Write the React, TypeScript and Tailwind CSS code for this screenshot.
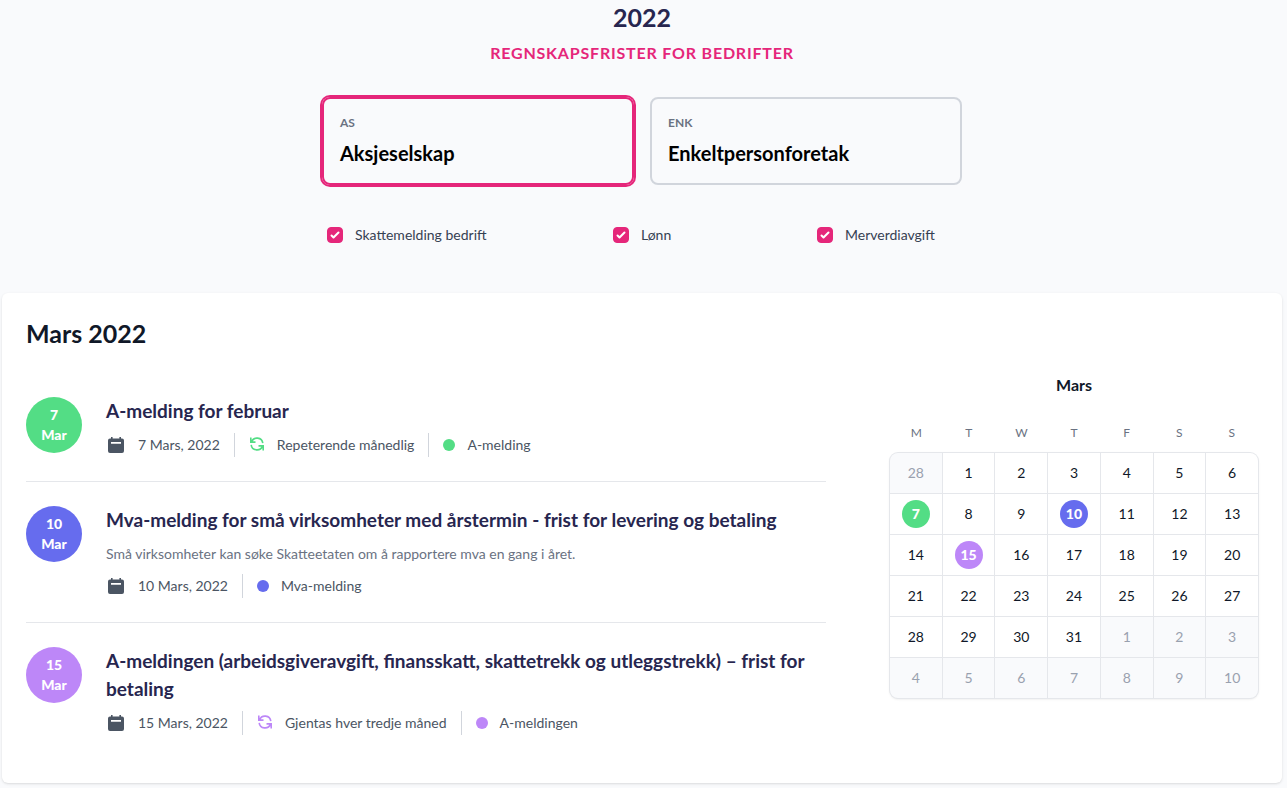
import { useState } from 'react';
import clsx from 'clsx';

type Tone = 'green' | 'indigo' | 'purple';

interface Deadline {
  day: number;
  title: string;
  description?: string;
  repeats?: string;
  category: string;
  tone: Tone;
}

const toneBg: Record<Tone, string> = {
  green: 'bg-[#53dd85]',
  indigo: 'bg-[#666cee]',
  purple: 'bg-[#bd87f8]',
};

const toneText: Record<Tone, string> = {
  green: 'text-[#53dd85]',
  indigo: 'text-[#666cee]',
  purple: 'text-[#bd87f8]',
};

const deadlines: Deadline[] = [
  {
    day: 7,
    title: 'A-melding for februar',
    repeats: 'Repeterende månedlig',
    category: 'A-melding',
    tone: 'green',
  },
  {
    day: 10,
    title: 'Mva-melding for små virksomheter med årstermin - frist for levering og betaling',
    description: 'Små virksomheter kan søke Skatteetaten om å rapportere mva en gang i året.',
    category: 'Mva-melding',
    tone: 'indigo',
  },
  {
    day: 15,
    title: 'A-meldingen (arbeidsgiveravgift, finansskatt, skattetrekk og utleggstrekk) – frist for betaling',
    repeats: 'Gjentas hver tredje måned',
    category: 'A-meldingen',
    tone: 'purple',
  },
];

const companyTypes = [
  { code: 'AS', name: 'Aksjeselskap' },
  { code: 'ENK', name: 'Enkeltpersonforetak' },
];

const filters = ['Skattemelding bedrift', 'Lønn', 'Merverdiavgift'];

const weekdays = ['M', 'T', 'W', 'T', 'F', 'S', 'S'];

// 28 Feb, the 31 days of March and the first 10 of April
const calendarDays = Array.from({ length: 42 }, (_, i) => {
  if (i === 0) return { day: 28, current: false };
  if (i > 31) return { day: i - 31, current: false };
  return { day: i, current: true };
});

function CalendarIcon() {
  return (
    <svg viewBox="0 0 20 20" className="size-5 shrink-0 text-[#4b5563]" fill="currentColor" aria-hidden="true">
      <path
        fillRule="evenodd"
        d="M5 2h1.6v1.6h6.8V2H15v1.6h1a2 2 0 0 1 2 2V16a2 2 0 0 1-2 2H4a2 2 0 0 1-2-2V5.6a2 2 0 0 1 2-2h1V2Zm0 5v1.8h10V7H5Z"
      />
    </svg>
  );
}

function RepeatIcon({ tone }: { tone: Tone }) {
  return (
    <svg
      viewBox="0 0 16 16"
      className={clsx('size-4 shrink-0', toneText[tone])}
      fill="none"
      stroke="currentColor"
      strokeWidth="1.6"
      aria-hidden="true"
    >
      <path d="M1.8 .5v4.6h4.7M2.6 4.9A5.8 5.8 0 0 1 13.8 6.2" />
      <path d="M14.2 13.5V8.900H9.500M13.400 9.100A5.800 5.800 0 0 1 2.200 7.800" />
    </svg>
  );
}

function DeadlineItem({ deadline }: { deadline: Deadline }) {
  const { day, title, description, repeats, category, tone } = deadline;

  return (
    <li className="flex gap-6 py-6">
      <div
        className={clsx(
          'flex size-14 shrink-0 flex-col items-center justify-center rounded-full text-sm font-black text-white',
          toneBg[tone],
        )}
      >
        <span>{day}</span>
        <span>Mar</span>
      </div>
      <div className="min-w-0 flex-1">
        <h3 className="text-[19px] leading-7 font-bold text-[#27264f]">{title}</h3>
        {description && <p className="mt-2 text-sm leading-6 text-gray-500">{description}</p>}
        <div className="mt-2 flex h-6 items-center divide-x divide-gray-300 text-sm text-[#4b5563]">
          <div className="flex h-6 items-center gap-3 pr-3.5">
            <CalendarIcon />
            <span>{day} Mars, 2022</span>
          </div>
          {repeats && (
            <div className="flex h-6 items-center gap-3 px-3.5">
              <RepeatIcon tone={tone} />
              <span>{repeats}</span>
            </div>
          )}
          <div className="flex h-6 items-center gap-3 pl-3.5">
            <span className={clsx('size-3 rounded-full', toneBg[tone])} />
            <span>{category}</span>
          </div>
        </div>
      </div>
    </li>
  );
}

function MonthCalendar() {
  return (
    <section className="text-center">
      <h3 className="text-base leading-6 font-bold text-gray-900">Mars</h3>
      <div className="mt-6 grid grid-cols-7 text-xs leading-6 text-gray-500">
        {weekdays.map((weekday, i) => (
          <div key={i}>{weekday}</div>
        ))}
      </div>
      <div className="mt-2 grid grid-cols-7 gap-px overflow-hidden rounded-lg bg-gray-200 text-sm shadow-sm ring-1 ring-gray-200">
        {calendarDays.map(({ day, current }, i) => {
          const deadline = current ? deadlines.find(item => item.day === day) : undefined;
          return (
            <button
              key={i}
              type="button"
              className={clsx(
                'flex h-10 items-center justify-center',
                current ? 'bg-white text-gray-900' : 'bg-[#f9fafc] text-gray-400',
              )}
            >
              <span
                className={clsx(
                  'flex size-7 items-center justify-center rounded-full',
                  deadline && 'font-black text-white',
                  deadline && toneBg[deadline.tone],
                )}
              >
                {day}
              </span>
            </button>
          );
        })}
      </div>
    </section>
  );
}

export default function App() {
  const [companyType, setCompanyType] = useState('AS');
  const [active, setActive] = useState<string[]>(filters);

  const toggleFilter = (name: string) => {
    setActive(prev => (prev.includes(name) ? prev.filter(item => item !== name) : [...prev, name]));
  };

  return (
    <div className="min-h-screen bg-[#f9fafc] pr-[5px] pb-[5px] pl-0.5 font-['Lato','Liberation_Sans',sans-serif]">
      <header className="text-center">
        <h1 className="pt-px text-[25px] leading-8 font-bold text-[#27264f]">2022</h1>
        <p className="mt-2 text-base leading-6 font-bold tracking-wider text-[#e5267a] uppercase">
          Regnskapsfrister for bedrifter
        </p>
      </header>

      <div className="mx-auto mt-8 max-w-[640px]">
        <div className="grid grid-cols-2 gap-4">
          {companyTypes.map(({ code, name }) => (
            <button
              key={code}
              type="button"
              onClick={() => setCompanyType(code)}
              className={clsx(
                'flex h-[88px] flex-col justify-center rounded-lg border-2 px-4 text-left',
                companyType === code ? 'border-[#e5267a] ring-2 ring-[#e5267a]' : 'border-gray-300',
              )}
            >
              <span className="text-xs leading-4 font-bold text-gray-500">{code}</span>
              <span className="mt-2 text-xl leading-7 font-bold text-black">{name}</span>
            </button>
          ))}
        </div>

        <div className="mt-10 grid grid-cols-[286fr_204fr_145fr] pl-[5px]">
          {filters.map(name => (
            <label key={name} className="flex items-center text-sm text-gray-700">
              <input
                type="checkbox"
                checked={active.includes(name)}
                onChange={() => toggleFilter(name)}
                className="peer sr-only"
              />
              <span className="mr-3 flex size-4 items-center justify-center rounded border border-gray-300 bg-white peer-checked:border-[#e5267a] peer-checked:bg-[#e5267a]">
                <svg viewBox="0 0 16 16" className="size-4 shrink-0 fill-white" aria-hidden="true">
                  <path d="M12.207 4.793a1 1 0 0 1 0 1.414l-5 5a1 1 0 0 1-1.414 0l-2-2a1 1 0 0 1 1.414-1.414L6.5 9.086l4.293-4.293a1 1 0 0 1 1.414 0z" />
                </svg>
              </span>
              {name}
            </label>
          ))}
        </div>
      </div>

      <main className="mt-12 rounded-md bg-white p-6 shadow-sm">
        <h2 className="text-[25px] leading-8 font-bold text-gray-900">Mars 2022</h2>
        <div className="mt-6 grid grid-cols-12 gap-x-16">
          <ol className="col-span-8 divide-y divide-gray-200">
            {deadlines.map(deadline => (
              <DeadlineItem key={deadline.day} deadline={deadline} />
            ))}
          </ol>
          <div className="col-span-4">
            <MonthCalendar />
          </div>
        </div>
      </main>
    </div>
  );
}
